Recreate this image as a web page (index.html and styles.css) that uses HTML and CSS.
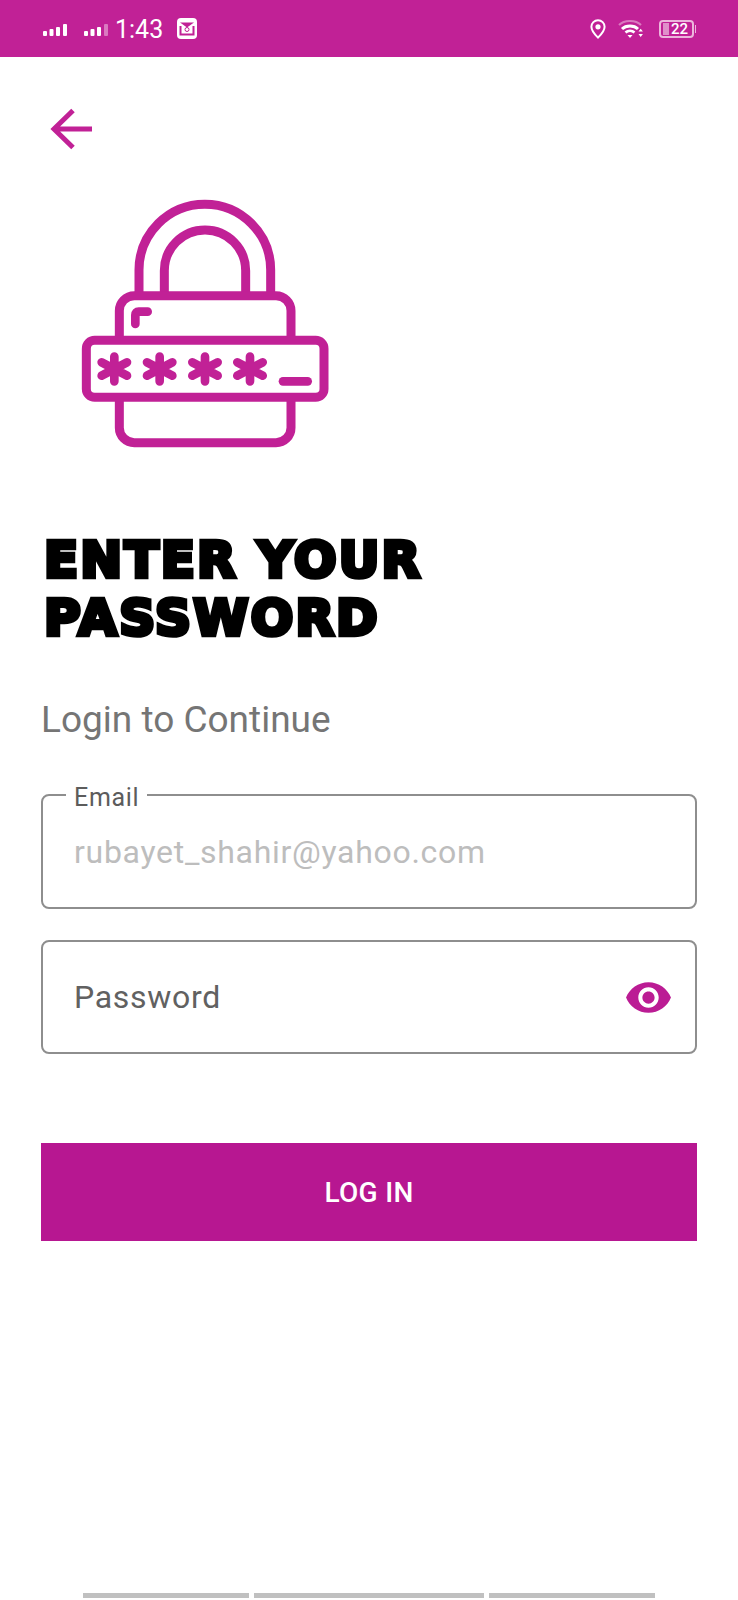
FILE: index.html
```html
<html>
    <head>
        <title>Enter your password</title>
        <link rel="stylesheet" href="styles.css">
    </head>
    <body>
        <div class="screen">
            <div class="status-bar">
                <svg class="signal" viewBox="0 0 24 12"><rect x="0" y="7" width="4" height="5" rx="1"/><rect x="6.5" y="5" width="4" height="7" rx="1"/><rect x="13" y="3" width="4" height="9" rx="1"/><rect x="20" y="0" width="4" height="12" rx="1"/></svg>
                <svg class="signal signal-2" viewBox="0 0 24 12"><rect x="0" y="7" width="4" height="5" rx="1"/><rect x="6.5" y="5" width="4" height="7" rx="1"/><rect x="13" y="3" width="4" height="9" rx="1"/><rect x="20" y="0" width="4" height="12" rx="1" opacity="0.4"/></svg>
                <span class="clock">1:43</span>
                <svg class="mail" viewBox="0 0 20 21"><rect width="20" height="21" rx="4" fill="#fff"/><path d="M3 4.500h14l-7 5z" fill="#c12196"/><path d="M3.500 8v8.500h13V8" fill="none" stroke="#c12196" stroke-width="2"/><circle cx="10" cy="11.500" r="2" fill="none" stroke="#c12196"/></svg>
                <div class="status-right">
                    <svg class="pin" viewBox="0 0 16 20"><path d="M8 1.2a6.6 6.6 0 0 0-6.6 6.6C1.400 12.300 8 18.600 8 18.600s6.600-6.300 6.600-10.800A6.600 6.600 0 0 0 8 1.200z" fill="none" stroke="#fff" stroke-width="2"/><circle cx="8" cy="7.800" r="2.600" fill="#fff"/></svg>
                    <svg class="wifi" viewBox="0 0 26 20"><path d="M1 6C6 .5 18 .5 23 6" fill="none" stroke="#fff" stroke-width="2" opacity="0.4"/><path d="M4 10c4-4 12-4 16 0" fill="none" stroke="#fff" stroke-width="3"/><path d="M7.500 13.500c2.500-2.500 6.500-2.500 9 0" fill="none" stroke="#fff" stroke-width="2.500"/><path d="M9.500 16h5L12 19z" fill="#fff"/><path d="M20.500 12.500l2.200-2.800 2.200 2.800zM20.500 15l2.200 3 2.200-3z" fill="#fff"/></svg>
                    <div class="battery">
                        <span class="battery-level"></span>
                        <span class="battery-text">22</span>
                    </div>
                    <span class="battery-tip"></span>
                </div>
            </div>

            <div class="content">
                <svg class="back" viewBox="0 0 44 42"><path d="M42 21H6M23 2.500L4 21l19 18.500" fill="none" stroke="#c12196" stroke-width="5"/></svg>

                <svg class="lock" viewBox="0 0 900 840">
                    <defs>
                        <g id="star">
                            <path d="M0 -37V37M-38 -20L38 20M-38 20L38 -20"/>
                        </g>
                    </defs>
                    <g fill="none" stroke="#c12196" stroke-width="27">
                        <path d="M237 340V270A197 197 0 0 1 632 270V340"/>
                        <path d="M313 340V272A122 122 0 0 1 557 272V340"/>
                        <path d="M178 480V392a45 45 0 0 1 45-45H648a45 45 0 0 1 45 45V480"/>
                        <path d="M178 655V743a45 45 0 0 0 45 45H648a45 45 0 0 0 45-45V655"/>
                        <rect x="79" y="481" width="713" height="171" rx="25"/>
                        <g stroke-linecap="round" stroke-width="26">
                            <path d="M226 432V405Q226 395 236 395H263"/>
                            <path d="M669 604H743"/>
                            <use href="#star" x="163" y="567"/>
                            <use href="#star" x="299" y="567"/>
                            <use href="#star" x="435" y="567"/>
                            <use href="#star" x="570" y="567"/>
                        </g>
                    </g>
                </svg>

                <h1 class="title">ENTER YOUR<br>PASSWORD</h1>
                <p class="subtitle">Login to Continue</p>

                <fieldset class="field field-email">
                    <legend>Email</legend>
                    <span class="hint">rubayet_shahir@yahoo.com</span>
                </fieldset>

                <div class="field field-password">
                    <span class="password-text">Password</span>
                    <svg class="eye" viewBox="0 0 24 24"><path d="M12 4.500C7 4.500 2.730 7.610 1 12c1.730 4.390 6 7.500 11 7.500s9.270-3.110 11-7.500c-1.730-4.390-6-7.500-11-7.500zM12 17c-2.760 0-5-2.240-5-5s2.240-5 5-5 5 2.240 5 5-2.240 5-5 5zm0-8c-1.660 0-3 1.340-3 3s1.340 3 3 3 3-1.340 3-3-1.340-3-3-3z" fill="#bb1c94"/></svg>
                </div>

                <button class="login">LOG IN</button>
            </div>

            <div class="nav-bar">
                <span class="nav-a"></span>
                <span class="nav-b"></span>
                <span class="nav-a"></span>
            </div>
        </div>
    </body>
</html>
```

FILE: styles.css
```css
body
{
    margin: 0;
    background: #fff;
    font-family: Roboto, sans-serif;
}
.screen
{
    height: 1600px;
    display: flex;
    flex-direction: column;
    overflow: hidden;
}

/* status bar */
.status-bar
{
    height: 57px;
    flex: none;
    background-color: #c12196;
    display: flex;
    align-items: center;
    padding: 0 42px 0 43px;
    box-sizing: border-box;
    color: #fff;
}
.signal
{
    width: 24px;
    height: 12px;
    fill: #fff;
    margin-top: 2px;
}
.signal-2
{
    margin-left: 17px;
}
.clock
{
    font-size: 25px;
    margin-left: 7px;
    line-height: 57px;
    padding-top: 2px;
}
.mail
{
    width: 20px;
    height: 21px;
    margin-left: 14px;
    margin-top: -1px;
}
.status-right
{
    margin-left: auto;
    display: flex;
    align-items: center;
}
.pin
{
    width: 16px;
    height: 20px;
    margin-right: 12px;
}
.wifi
{
    width: 26px;
    height: 20px;
    margin-right: 15px;
}
.battery
{
    width: 35px;
    height: 18px;
    border: 2px solid #ecb6dc;
    border-radius: 4px;
    box-sizing: border-box;
    display: flex;
    align-items: center;
    padding-left: 2px;
}
.battery-level
{
    width: 6px;
    height: 12px;
    background: #e08fca;
}
.battery-text
{
    font-size: 15px;
    font-weight: 500;
    margin-left: 2px;
}
.battery-tip
{
    width: 1px;
    height: 8px;
    margin-left: 1px;
    background: #ecb6dc;
}

/* main part */
.content
{
    padding: 0 41px;
    flex: 1;
}
.back
{
    display: block;
    width: 44px;
    height: 42px;
    margin: 51px 0 0 9px;
}
.lock
{
    display: block;
    width: 300px;
    height: 280px;
    margin: 30px 0 0 19px;
}
/* heading face is not installed, so DejaVu bold gets thickened with a stroke */
.title
{
    margin: 71px 0 0 3px;
    font-family: "DejaVu Sans", sans-serif;
    font-size: 50px;
    line-height: 58px;
    font-weight: 700;
    letter-spacing: 2.2px;
    color: #000;
    -webkit-text-stroke: 4.5px #000;
}
.subtitle
{
    margin: 51px 0 0;
    font-size: 37px;
    line-height: 44px;
    color: #757575;
}
.field
{
    box-sizing: border-box;
    width: 656px;
    height: 114px;
    margin: 0;
    border: 2px solid #8e8e8e;
    border-radius: 8px;
    background: #fff;
}
.field-email
{
    height: 131px;
    margin-top: 36px;
    padding: 0 0 0 31px;
}
.field-email legend
{
    margin-left: -8px;
    padding: 6px 8px 0;
    font-size: 25px;
    line-height: 28px;
    letter-spacing: 0.7px;
    color: #5c5c5c;
}
.hint
{
    display: block;
    margin-top: 18px;
    font-size: 32px;
    line-height: 44px;
    letter-spacing: 0.7px;
    color: #bdbdbd;
}
.field-password
{
    margin-top: 31px;
    display: flex;
    align-items: center;
    padding: 0 22px 0 31px;
}
.password-text
{
    font-size: 32px;
    letter-spacing: 0.7px;
    color: #616161;
}
.eye
{
    width: 49px;
    height: 49px;
    margin-left: auto;
}
.login
{
    display: block;
    width: 656px;
    height: 98px;
    margin-top: 89px;
    border: none;
    background-color: #b71791;
    color: #fff;
    font-family: Roboto, sans-serif;
    font-size: 28px;
    letter-spacing: 0.3px;
    font-weight: 500;
}

/* bottom gesture bar */
.nav-bar
{
    flex: none;
    display: flex;
    gap: 5px;
    padding-left: 83px;
    margin-bottom: 2px;
}
.nav-bar span
{
    height: 5px;
    background: #c0c0c0;
}
.nav-a
{
    width: 166px;
}
.nav-b
{
    width: 230px;
}
```
